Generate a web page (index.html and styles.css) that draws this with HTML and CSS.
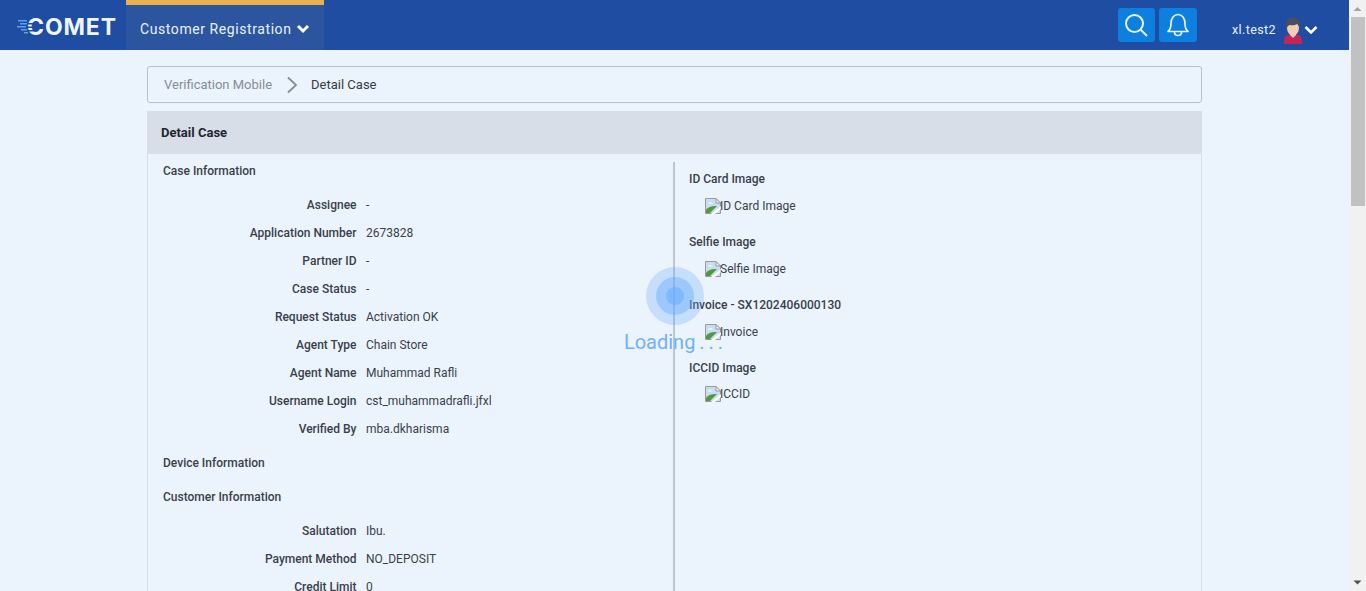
FILE: index.html
```html
<!DOCTYPE html>
<html lang="en">
  <head>
    <meta charset="UTF-8" />
    <title>Detail Case</title>
    <link rel="stylesheet" href="styles.css">
  </head>
  <body>
    <div class="page">
      <header class="topbar">
        <div class="logo">
          <span class="logo-text">COMET</span>
          <svg class="logo-lines" width="20" height="18" viewBox="0 0 20 18">
            <g fill="#1e4da1">
              <rect x="9" y="5" width="11" height="1.500"/>
              <rect x="9" y="8.500" width="9" height="1.500"/>
              <rect x="9" y="12" width="11" height="1.500"/>
            </g>
            <g fill="#5f9fe8">
              <rect x="1" y="2" width="9" height="1.500"/>
              <rect x="3" y="5" width="7" height="1.500"/>
              <rect x="0" y="8" width="9" height="1.500"/>
              <rect x="4" y="11" width="6" height="1.500"/>
              <rect x="7" y="14" width="4" height="1.500"/>
            </g>
          </svg>
        </div>
        <div class="menu-active">
          Customer Registration
          <svg class="chev" width="14" height="10" viewBox="0 0 14 10"><path d="M2 2l5 5 5-5" fill="none" stroke="#fff" stroke-width="3"/></svg>
        </div>
        <div class="topbar-right">
          <button class="icon-btn icon-btn-search">
            <svg width="26" height="26" viewBox="0 0 26 26"><circle cx="11.5" cy="11.5" r="8.5" fill="none" stroke="#e8f2fd" stroke-width="2"/><path d="M18 18l6 6" stroke="#e8f2fd" stroke-width="2" fill="none"/></svg>
          </button>
          <button class="icon-btn icon-btn-bell">
            <svg width="24" height="26" viewBox="0 0 24 26"><path d="M2 19.5c2.500-2 3-4 3-8C5 6 8 2.500 12 2.500S19 6 19 11.500c0 4 .5 6 3 8z" fill="none" stroke="#e8f2fd" stroke-width="1.700" stroke-linejoin="round"/><path d="M8.500 20c0 2 1.500 3.500 3.500 3.500s3.500-1.500 3.500-3.500" fill="none" stroke="#e8f2fd" stroke-width="1.700"/></svg>
          </button>
          <span class="username">xl.test2</span>
          <svg class="avatar" width="20" height="28" viewBox="0 0 20 28">
            <path d="M1 27v-4c0-3 2-4.500 5-5.500h8c3 1 5 2.500 5 5.500v4z" fill="#c4245a"/>
            <path d="M7 15h6v3l-3 3-3-3z" fill="#efd0b4"/>
            <ellipse cx="10" cy="11" rx="6" ry="7.500" fill="#efd0b4"/>
            <path d="M3 12V6.500C3 3 6 .5 10 .5s7 2.500 7 6V12c-.5-2-1.500-4-3-5-2 1.500-5 1.500-7.500 1C5 9 3.500 10 3 12z" fill="#4a4f5e"/>
          </svg>
          <svg class="chev-small" width="14" height="10" viewBox="0 0 14 10"><path d="M1.500 2L7 7.500 12.500 2" fill="none" stroke="#fff" stroke-width="2.600"/></svg>
        </div>
      </header>

      <main class="content">
        <nav class="breadcrumb">
          <span class="crumb-link">Verification Mobile</span>
          <svg class="crumb-sep" width="12" height="18" viewBox="0 0 12 18"><path d="M2 1.500l8 7.500-8 7.500" fill="none" stroke="#868c95" stroke-width="1.800"/></svg>
          <span class="crumb-current">Detail Case</span>
        </nav>

        <section class="card">
          <h2 class="card-title">Detail Case</h2>
          <div class="card-body">
            <div class="col-left">
              <h3 class="section-title">Case Information</h3>
              <dl class="rows">
                <div class="row"><dt>Assignee</dt><dd>-</dd></div>
                <div class="row"><dt>Application Number</dt><dd>2673828</dd></div>
                <div class="row"><dt>Partner ID</dt><dd>-</dd></div>
                <div class="row"><dt>Case Status</dt><dd>-</dd></div>
                <div class="row"><dt>Request Status</dt><dd>Activation OK</dd></div>
                <div class="row"><dt>Agent Type</dt><dd>Chain Store</dd></div>
                <div class="row"><dt>Agent Name</dt><dd>Muhammad Rafli</dd></div>
                <div class="row"><dt>Username Login</dt><dd>cst_muhammadrafli.jfxl</dd></div>
                <div class="row"><dt>Verified By</dt><dd>mba.dkharisma</dd></div>
              </dl>
              <h3 class="section-title device">Device Information</h3>
              <h3 class="section-title customer">Customer Information</h3>
              <dl class="rows">
                <div class="row"><dt>Salutation</dt><dd>Ibu.</dd></div>
                <div class="row"><dt>Payment Method</dt><dd>NO_DEPOSIT</dd></div>
                <div class="row"><dt>Credit Limit</dt><dd>0</dd></div>
              </dl>
            </div>
            <div class="col-right">
              <div class="image-block">
                <h3 class="image-title">ID Card Image</h3>
                <div class="broken"><svg class="broken-icon" width="16" height="16"><use href="#broken"/></svg>ID Card Image</div>
              </div>
              <div class="image-block">
                <h3 class="image-title">Selfie Image</h3>
                <div class="broken"><svg class="broken-icon" width="16" height="16"><use href="#broken"/></svg>Selfie Image</div>
              </div>
              <div class="image-block">
                <h3 class="image-title">Invoice - SX1202406000130</h3>
                <div class="broken"><svg class="broken-icon" width="16" height="16"><use href="#broken"/></svg>Invoice</div>
              </div>
              <div class="image-block">
                <h3 class="image-title">ICCID Image</h3>
                <div class="broken"><svg class="broken-icon" width="16" height="16"><use href="#broken"/></svg>ICCID</div>
              </div>
            </div>
          </div>
        </section>
      </main>
    </div>

    <div class="scrollbar">
      <svg class="arrow" width="17" height="17" viewBox="0 0 17 17"><path d="M4.500 11h8L8.500 7z" fill="#a3a3a3"/></svg>
      <div class="thumb"></div>
      <div class="track"></div>
      <svg class="arrow" width="17" height="17" viewBox="0 0 17 17"><path d="M4.500 6.500h8l-4 4z" fill="#505050"/></svg>
    </div>

    <div class="loader">
      <div class="pulse"><div class="pulse-mid"><div class="pulse-core"></div></div></div>
      <div class="loader-text">Loading . . .</div>
    </div>

    <svg class="defs" width="0" height="0">
      <symbol id="broken" viewBox="0 0 16 16">
        <path d="M.5.500h10.500l4.500 4.500v10.500H.500z" fill="#c9dcf6" stroke="#9a9a9a"/>
        <path d="M11 .5v4.500h4.500z" fill="#f4f4f4" stroke="#9a9a9a"/>
        <path d="M3 5c2-1 4-1 5 .5H3z" fill="#fff"/>
        <path d="M1 15v-3c2-3 6-4.500 11-4l-7 7z" fill="#4f9a3a"/>
        <path d="M6 16l10-8v3l-6 5z" fill="#fff"/>
      </symbol>
    </svg>
  </body>
</html>
```

FILE: styles.css
```css
* {
  box-sizing: border-box;
}
body {
  margin: 0;
  height: 591px;
  overflow: hidden;
  display: flex;
  background: #ebf3fd;
  font-family: Roboto, "Liberation Sans", sans-serif;
  font-size: 12px;
  color: #3a3f4a;
}
.page {
  flex: 1;
  min-width: 0;
}
.topbar {
  display: flex;
  align-items: stretch;
  height: 50px;
  background: #1e4da1;
  color: #e8f2fd;
}
.logo {
  width: 126px;
  display: flex;
  align-items: center;
  padding-left: 27px;
  position: relative;
}
.logo-lines {
  position: absolute;
  left: 17px;
  top: 18px;
}
.logo-text {
  font-family: Inter, Roboto, sans-serif;
  font-size: 23px;
  font-weight: 700;
  color: #f0f6fe;
  letter-spacing: 0.9px;
  line-height: 1;
  margin-top: 4px;
}
.menu-active {
  width: 198px;
  display: flex;
  align-items: center;
  padding: 2px 0 0 14px;
  border-top: 5px solid #e8b04f;
  background: #2b559f;
  font-size: 14px;
  letter-spacing: 0.58px;
}
.chev {
  margin-left: 4px;
  margin-top: 1px;
}
.topbar-right {
  margin-left: auto;
  display: flex;
  align-items: center;
  padding-right: 31px;
}
.icon-btn {
  width: 37px;
  height: 34px;
  padding: 0;
  border: 0;
  border-radius: 3px;
  background: #0c7fdf;
  display: flex;
  align-items: center;
  justify-content: center;
}
.icon-btn-search {
  margin-right: 4px;
}
.icon-btn-bell {
  width: 38px;
}
.username {
  margin: 8px 0 0 35px;
  font-size: 12.5px;
  letter-spacing: 0.4px;
}
.avatar {
  margin-left: 7px;
  margin-top: 11px;
}
.chev-small {
  margin-left: 1px;
  margin-top: 10px;
}
.content {
  padding: 16px 147px 0;
}
.breadcrumb {
  height: 37px;
  display: flex;
  align-items: center;
  padding-left: 16px;
  border: 1px solid #b9bfc9;
  border-radius: 3px;
  font-size: 13px;
}
.crumb-link {
  color: #868c95;
}
.crumb-sep {
  margin: 0 13px 0 14px;
}
.crumb-current {
  color: #373c47;
}
.card {
  margin-top: 8px;
  border: 1px solid #d7dee8;
  border-top: 0;
  height: 500px;
}
.card-title {
  margin: 0;
  height: 43px;
  line-height: 44px;
  padding-left: 13px;
  background: #d7dee8;
  font-size: 13px;
  font-weight: 700;
  color: #22262e;
}
.card-body {
  display: flex;
  padding-top: 8px;
  height: 456px;
}
.col-left {
  width: 527px;
  border-right: 2px solid #bcc5d2;
  padding-left: 15px;
}
.section-title {
  margin: 0;
  font-size: 12px;
  font-weight: 500;
  line-height: 18px;
}
.section-title.device {
  margin-top: 11px;
}
.section-title.customer {
  margin-top: 16px;
}
.rows {
  margin: 11px 0 0;
}
.row {
  display: flex;
  height: 28px;
  align-items: center;
}
.row dt {
  width: 193.5px;
  text-align: right;
  font-weight: 500;
}
.row dd {
  margin: 0 0 0 9.5px;
}
.col-right {
  flex: 1;
  padding: 8px 0 0 14px;
}
.image-block {
  height: 63px;
}
.image-title {
  margin: 0;
  font-size: 12px;
  font-weight: 500;
  line-height: 18px;
}
.broken {
  margin: 10px 0 0 16px;
  display: flex;
  align-items: center;
  height: 16px;
}
.image-block:last-child .broken {
  margin-top: 9px;
}
.broken-icon {
  flex: none;
  margin-right: -1px;
}
.defs {
  position: absolute;
}
.scrollbar {
  flex: none;
  width: 17px;
  height: 591px;
  background: #f1f1f1;
  display: flex;
  flex-direction: column;
}
.arrow {
  flex: none;
}
.thumb {
  height: 189px;
  margin: 0 1px 0 2px;
  background: #c1c1c1;
}
.track {
  flex: 1;
}
.loader {
  position: absolute;
  left: 575px;
  top: 267px;
  width: 200px;
  display: flex;
  flex-direction: column;
  align-items: center;
}
.pulse {
  width: 58px;
  height: 58px;
  border-radius: 50%;
  background: rgba(100, 170, 255, 0.28);
  display: flex;
  align-items: center;
  justify-content: center;
}
.pulse-mid {
  width: 38px;
  height: 38px;
  border-radius: 50%;
  background: rgba(100, 170, 255, 0.42);
  display: flex;
  align-items: center;
  justify-content: center;
}
.pulse-core {
  width: 18px;
  height: 18px;
  border-radius: 50%;
  background: rgba(100, 170, 255, 0.5);
}
.loader-text {
  margin: 5px 3px 0 0;
  font-size: 20px;
  line-height: 24px;
  word-spacing: -1px;
  color: #72b0fa;
}
```
